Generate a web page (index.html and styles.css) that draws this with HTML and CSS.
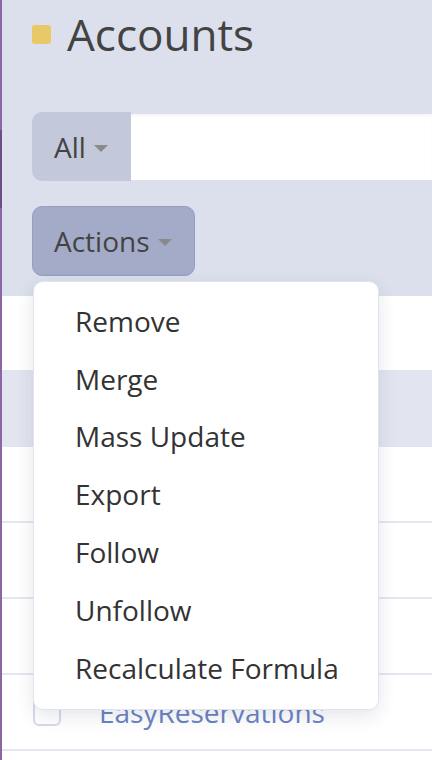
FILE: index.html
```html
<!DOCTYPE html>
<html lang="en">
<head>
<meta charset="utf-8">
<title>Accounts</title>
<link rel="stylesheet" href="styles.css">
</head>
<body>
<div class="app">
  <div class="edge"><span class="edge-dark"></span></div>
  <div class="main">
    <header class="page-header">
      <div class="title-row">
        <span class="title-icon"></span>
        <h1 class="title">Accounts</h1>
      </div>
      <div class="search-row">
        <div class="filter-btn">All <span class="caret"></span></div>
        <div class="search-input"></div>
      </div>
      <div class="actions-row">
        <div class="actions-btn">Actions <span class="caret"></span></div>
      </div>
    </header>
    <div class="list">
      <div class="list-gap"></div>
      <div class="list-head"></div>
      <div class="list-row"></div>
      <div class="list-row"></div>
      <div class="list-row"></div>
      <div class="list-row">
        <span class="checkbox"></span>
        <a class="record-link">EasyReservations</a>
      </div>
    </div>
  </div>
  <ul class="dropdown">
    <li>Remove</li>
    <li>Merge</li>
    <li>Mass Update</li>
    <li>Export</li>
    <li>Follow</li>
    <li>Unfollow</li>
    <li>Recalculate Formula</li>
  </ul>
</div>
</body>
</html>
```

FILE: styles.css
```css
* { box-sizing: border-box; }
html, body {
  margin: 0;
  padding: 0;
  background: #ffffff;
  font-family: "Open Sans", "Noto Sans", sans-serif;
  color: #333333;
  overflow: hidden;
}
.app {
  position: relative;
  display: flex;
  width: 432px;
  height: 760px;
  overflow: hidden;
}
.edge {
  width: 2px;
  flex: 0 0 2px;
  background: #8c66a4;
  display: flex;
  flex-direction: column;
  padding-top: 130px;
}
.edge-dark {
  display: block;
  height: 78px;
  background: #6b4c84;
}
.main {
  flex: 1;
  min-width: 0;
  display: flex;
  flex-direction: column;
}
.page-header {
  background: #dbe0ec;
  padding: 0 0 20px 30px;
  height: 296px;
}
.title-row {
  display: flex;
  align-items: center;
  height: 68px;
}
.title-icon {
  width: 19px;
  height: 19px;
  border-radius: 3px;
  background: #e9c867;
  margin-right: 16px;
  margin-top: 1px;
}
.title {
  margin: 0;
  font-weight: 400;
  font-size: 44px;
  line-height: 68px;
  color: #434343;
}
.search-row {
  display: flex;
  align-items: center;
  margin-top: 44px;
  height: 69px;
}
.filter-btn {
  width: 99px;
  height: 69px;
  background: #c3c8db;
  border-radius: 10px 0 0 10px;
  padding-left: 22px;
  display: flex;
  align-items: center;
  font-size: 28px;
  color: #434343;
}
.caret {
  display: inline-block;
  width: 0;
  height: 0;
  border-left: 7.5px solid transparent;
  border-right: 7.5px solid transparent;
  border-top: 7px solid #8a8a8a;
  margin-left: 8px;
  margin-top: 3px;
}
.search-input {
  flex: 1;
  height: 66px;
  background: #ffffff;
  box-shadow: inset 0 2px 2px rgba(0, 0, 0, 0.04);
}
.actions-row {
  display: flex;
  margin-top: 25px;
}
.actions-btn {
  width: 163px;
  height: 70px;
  background: #a3abc8;
  border: 1px solid #959ebf;
  border-radius: 10px;
  padding-left: 21px;
  display: flex;
  align-items: center;
  font-size: 28px;
  color: #434343;
}
.list {
  display: flex;
  flex-direction: column;
}
.list-gap { height: 74px; }
.list-head {
  height: 77px;
  background: #e2e5ef;
}
.list-row {
  height: 76px;
  border-bottom: 2px solid #e4e7f0;
  display: flex;
  align-items: center;
  padding-left: 31px;
}
.checkbox {
  width: 28px;
  height: 28px;
  border: 2px solid #d6daea;
  border-radius: 6px;
  margin-right: 38px;
}
.record-link {
  font-size: 28px;
  color: #6b83c4;
}
.dropdown {
  position: absolute;
  left: 33px;
  top: 281px;
  width: 346px;
  margin: 0;
  padding: 10px 0 12px;
  list-style: none;
  background: #ffffff;
  border: 1px solid #e1e4ee;
  border-radius: 10px;
  box-shadow: 0 6px 18px rgba(40, 50, 80, 0.12);
}
.dropdown li {
  height: 57.8px;
  display: flex;
  align-items: center;
  padding-left: 41px;
  font-size: 28px;
  color: #333333;
}
```
